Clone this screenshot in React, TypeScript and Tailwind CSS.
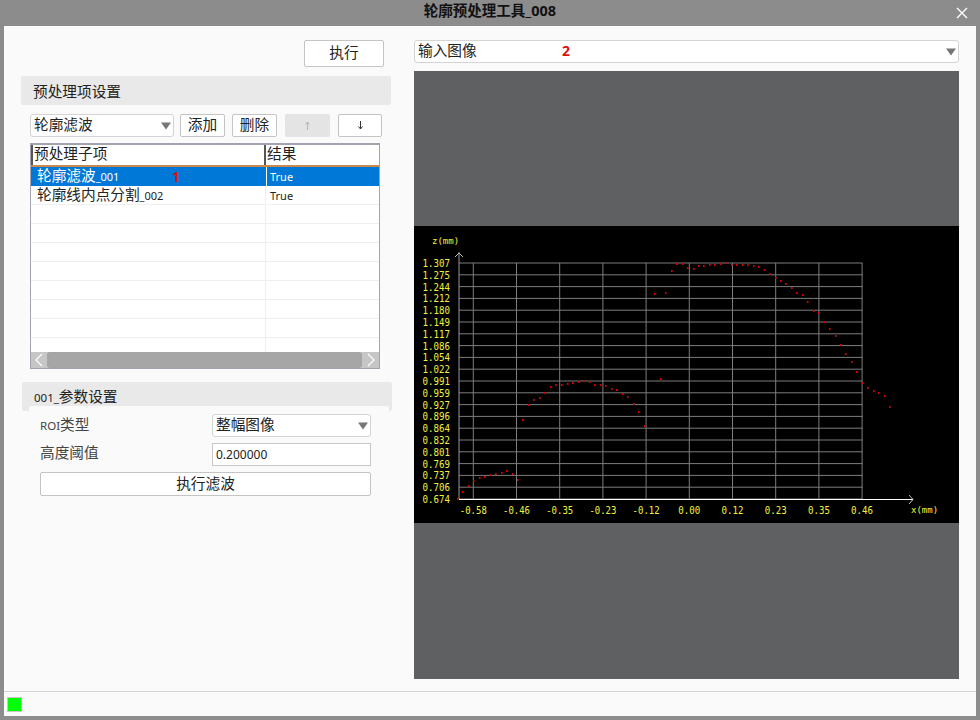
const FONT = '"Noto Sans", "Noto Sans CJK SC", sans-serif';

const yLabels = ['1.307', '1.275', '1.244', '1.212', '1.180', '1.149', '1.117', '1.086', '1.054', '1.022', '0.991', '0.959', '0.927', '0.896', '0.864', '0.832', '0.801', '0.769', '0.737', '0.706', '0.674'];
const xLabels = ['-0.58', '-0.46', '-0.35', '-0.23', '-0.12', '0.00', '0.12', '0.23', '0.35', '0.46'];

// points measured on the page, shifted into the chart's own coordinates below
const rawPoints: [number, number][] = [
  [458, 499], [463, 492], [469, 486], [474, 481], [480, 478], [485, 477], [491, 475], [496, 474], [502, 473], [507, 471], [513, 474], [518, 480],
  [523, 420], [529, 405], [534, 400], [540, 398], [545, 393], [551, 387], [556, 385], [562, 385], [568, 384], [573, 383], [579, 382], [584, 381],
  [590, 382], [595, 385], [601, 385], [606, 386], [612, 389], [617, 390], [623, 394], [628, 397], [634, 404], [639, 412], [645, 426],
  [661, 379], [655, 294], [666, 293], [672, 271], [677, 264], [683, 264], [688, 268], [694, 269], [699, 266], [704, 266], [710, 265], [715, 265],
  [721, 264], [726, 263], [732, 265], [737, 265], [743, 265], [748, 265], [754, 266], [759, 267], [765, 270], [770, 274], [776, 278], [781, 281],
  [786, 284], [792, 288], [797, 293], [803, 295], [808, 302], [814, 311], [819, 313], [825, 322], [830, 329], [836, 336], [841, 345], [846, 354],
  [852, 362], [857, 372], [863, 383], [868, 388], [874, 391], [879, 393], [885, 396], [890, 407],
];

function Arrow() {
  return (
    <svg width="12" height="8" viewBox="0 0 12 8" className="text-[#777]">
      <path d="M1 .5h10L6 7.5z" fill="currentColor" />
    </svg>
  );
}

function Btn({ label, className }: { label: string; className: string }) {
  return (
    <button className={`flex items-center justify-center rounded-[2px] border border-[#c4c4c4] bg-white pb-[3px] text-[14.67px] text-[#222] ${className}`}>
      {label}
    </button>
  );
}

function Combo({ label, className }: { label: string; className: string }) {
  return (
    <div className={`flex items-center justify-between rounded-[3px] border border-[#d4d4d4] bg-white pl-[3px] pr-[1px] text-[14.67px] text-[#222] ${className}`}>
      <span className="pb-[3px]">{label}</span>
      <Arrow />
    </div>
  );
}

function Chart() {
  const ox = 414;
  const oy = 226;
  const hLines = yLabels.map((_, i) => 263 + i * 11.8 - oy);
  const vLines = Array.from({ length: 10 }, (_, i) => 473.3 + i * 43.2 - ox);
  return (
    <svg width="545" height="297" viewBox="0 0 545 297" className="block bg-black">
      {hLines.map((y, i) => (
        <line key={i} x1={45} x2={448.5} y1={y} y2={y} stroke="#7d7d7d" strokeWidth="1" />
      ))}
      {vLines.map((x, i) => (
        <line key={i} x1={x} x2={x} y1={37} y2={273} stroke="#7d7d7d" strokeWidth="1" />
      ))}
      <line x1="45" x2="45" y1="26" y2="273" stroke="#999" />
      <path d="M41 31l4-4 4 4" fill="none" stroke="#bbb" />
      <line x1="45" x2="499" y1="273.5" y2="273.5" stroke="#fff" />
      <path d="M495 269l4 4.5-4 4.5" fill="none" stroke="#bbb" />
      {rawPoints.map(([x, y], i) => (
        <rect key={i} x={x - ox - 1} y={y - oy - 1} width="1.6" height="2" fill="#d80000" />
      ))}
      <g fill="#f2f23c" fontFamily='"DejaVu Sans Mono", monospace' fontSize="11">
        <text x="18" y="18" fontSize="9">z(mm)</text>
        {yLabels.map((l, i) => (
          <text key={l} x="8.5" y={hLines[i] + 4} textLength="27.5" lengthAdjust="spacingAndGlyphs">{l}</text>
        ))}
        {xLabels.map((l, i) => (
          <text key={l} x={vLines[i]} y="288" textAnchor="middle" textLength={l.startsWith('-') ? 27 : 22} lengthAdjust="spacingAndGlyphs">{l}</text>
        ))}
        <text x="497" y="287" fontSize="9">x(mm)</text>
      </g>
    </svg>
  );
}

function SmallArrow({ up }: { up: boolean }) {
  return (
    <svg width="7" height="9" viewBox="0 0 7 9">
      <path d={up ? 'M3.5 9V1M1.5 3.5l2-2.5 2 2.5' : 'M3.5 0v8M1.5 5.5l2 2.5 2-2.5'} fill="none" stroke={up ? '#b5b5b5' : '#333'} strokeWidth="1" />
    </svg>
  );
}

export default function App() {
  const rows = [
    { name: '轮廓滤波', id: '_001', result: 'True', selected: true },
    { name: '轮廓线内点分割', id: '_002', result: 'True', selected: false },
    ...Array.from({ length: 8 }, () => ({ name: '', id: '', result: '', selected: false })),
  ];

  return (
    <div className="flex h-[720px] w-[980px] flex-col overflow-hidden bg-[#8c8c8c]" style={{ fontFamily: FONT }}>
      {/* title bar */}
      <div className="relative flex h-[26px] shrink-0 items-center justify-center pb-[5px]">
        <span className="text-[14.5px] font-bold text-[#111]">轮廓预处理工具_008</span>
        <svg width="12" height="12" viewBox="0 0 12 12" className="absolute right-[12px] top-[7px]">
          <path d="M1 1l10 10M11 1L1 11" stroke="#fff" strokeWidth="1.4" />
        </svg>
      </div>

      <div className="mx-[4px] flex h-[690px] flex-col bg-[#fafafa]">
        <div className="flex h-[665px] shrink-0">
          {/* left panel */}
          <div className="flex w-[410px] shrink-0 flex-col">
            <div className="ml-[300px] mt-[14px] w-[80px]">
              <Btn label="执行" className="h-[27px] w-[80px]" />
            </div>
            <div className="ml-[17px] mt-[9px] flex h-[29px] w-[370px] items-center rounded-[2px] bg-[#e9e9e9] pl-[12px] text-[14.67px] text-[#222]">
              预处理项设置
            </div>
            <div className="ml-[26px] mt-[9px] flex h-[23px] items-stretch">
              <Combo label="轮廓滤波" className="w-[144px]" />
              <Btn label="添加" className="ml-[6px] w-[45px]" />
              <Btn label="删除" className="ml-[7px] w-[45px]" />
              <button className="ml-[8px] flex w-[45px] items-center justify-center rounded-[2px] bg-[#e4e4e4]"><SmallArrow up /></button>
              <button className="ml-[8px] flex w-[44px] items-center justify-center rounded-[2px] border border-[#c4c4c4] bg-white"><SmallArrow up={false} /></button>
            </div>

            {/* table */}
            <div className="relative ml-[26px] mt-[6px] flex h-[226px] w-[350px] flex-col border border-t-[2px] border-[#a3a3ad] bg-white">
              <div className="grid h-[22px] shrink-0 grid-cols-[235px_1fr] border-b-2 border-[#c88a4c] text-[14.67px] leading-[16px] text-[#222]">
                <div className="border-l-2 border-r-2 border-[#555] pl-[1px]">预处理子项</div>
                <div className="pl-[1px]">结果</div>
              </div>
              <div className="flex min-h-0 flex-1 flex-col">
                {rows.map((r, i) => (
                  <div
                    key={i}
                    className={`relative grid grid-cols-[235px_1fr] text-[#222] ${i === rows.length - 1 ? 'min-h-0 flex-1' : 'h-[19px] shrink-0 border-b'} ${r.selected ? 'border-[#0078d7] bg-[#0078d7] text-white' : 'border-[#efefef]'}`}
                  >
                    <div className={`pl-[6px] leading-[17px] ${r.selected ? '' : 'border-r border-[#efefef]'}`}>
                      <span className="text-[14.67px]">{r.name}</span>
                      <span className="text-[11px]">{r.id}</span>
                    </div>
                    <div className="border-l border-white pl-[3px] text-[11px] leading-[19px]">{r.result}</div>
                    {r.selected && <span className="absolute left-[141px] top-0 text-[14px] font-bold leading-[19px] text-[#e01010]">1</span>}
                  </div>
                ))}
              </div>
              <div className="flex h-[16px] shrink-0 items-stretch bg-[#c6c6c6]">
                <div className="flex w-[16px] items-center justify-center">
                  <svg width="12" height="14" viewBox="0 0 12 14"><path d="M9 1L3 7l6 6" fill="none" stroke="#fff" strokeWidth="1.2" /></svg>
                </div>
                <div className="flex-1 rounded-[3px] bg-[#a6a6a6]" />
                <div className="flex w-[17px] items-center justify-center">
                  <svg width="12" height="14" viewBox="0 0 12 14"><path d="M3 1l6 6-6 6" fill="none" stroke="#fff" strokeWidth="1.2" /></svg>
                </div>
              </div>
            </div>

            {/* params */}
            <div className="ml-[18px] mt-[13px] h-[29px] w-[370px] rounded-[2px] bg-[#e9e9e9] pl-[12px] pt-[4px] text-[14.67px] leading-[20px] text-[#222]">
              <span className="text-[11.5px]">001_</span>参数设置
            </div>
            <div className="ml-[25px] mt-[-5px] flex w-[360px] flex-col rounded-t-[2px] bg-[#fafafa] pl-[11px] pt-[8px] text-[14.67px] text-[#444]">
              <div className="flex h-[23px] items-center">
                <span className="w-[172px] pb-[4px]"><span className="text-[11.5px]">ROI</span>类型</span>
                <Combo label="整幅图像" className="h-[23px] w-[159px]" />
              </div>
              <div className="mt-[6px] flex h-[23px] items-center">
                <span className="w-[172px] pb-[6px]">高度阈值</span>
                <div className="flex h-[23px] w-[159px] items-center border border-[#c8c8c8] bg-white pl-[3px] text-[12px] text-[#222]">0.200000</div>
              </div>
              <Btn label="执行滤波" className="mt-[6px] h-[24px] w-[331px]" />
            </div>
          </div>

          {/* right panel */}
          <div className="flex w-[545px] shrink-0 flex-col">
            <div className="relative mt-[14px] w-[545px]">
              <Combo label="输入图像" className="h-[23px] w-[545px]" />
              <span className="absolute left-[148px] top-0 text-[14px] font-bold leading-[22px] text-[#e01010]">2</span>
            </div>
            <div className="mt-[8px] h-[608px] bg-[#5f6062] pt-[155px]">
              <Chart />
            </div>
          </div>
        </div>

        {/* status bar */}
        <div className="flex flex-1 items-center border-t border-[#d2d2d2] pl-[3px]">
          <div className="h-[15px] w-[15px] border border-[#c8c8c8] bg-[#00ff00]" />
        </div>
      </div>
    </div>
  );
}
